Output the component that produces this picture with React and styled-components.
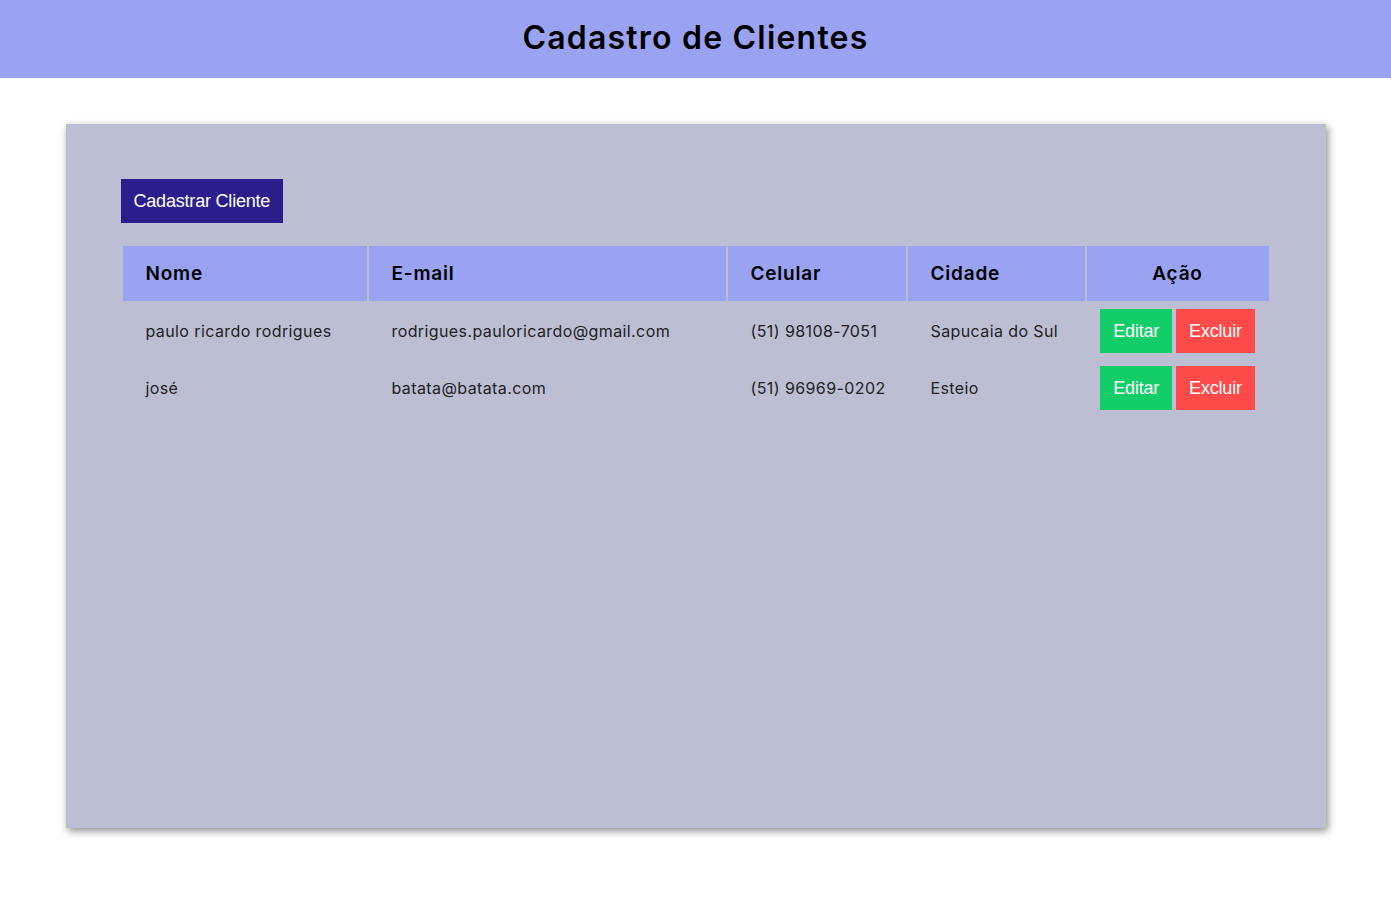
import React from "react";
import styled, { createGlobalStyle } from "styled-components";

const GlobalStyle = createGlobalStyle`
  * {
    box-sizing: border-box;
  }
  body {
    margin: 0;
    background: #ffffff;
    font-family: Inter, "Noto Sans", sans-serif;
  }
`;

const Header = styled.header`
  height: 78px;
  padding-bottom: 3px;
  background-color: #9aa2f2;
  display: flex;
  align-items: center;
  justify-content: center;
`;

const Title = styled.h1`
  margin: 0;
  font-size: 32px;
  font-weight: 600;
  letter-spacing: 1.2px;
  color: #000;
`;

const Container = styled.main`
  width: 1260px;
  height: 704px;
  margin: 46px auto 60px;
  padding: 55px;
  background-color: #bcbed4;
  box-shadow: 2px 3px 8px rgba(0, 0, 0, 0.45);
`;

const Button = styled.button`
  border: none;
  padding: 12px 13px;
  height: 44px;
  font-family: "Liberation Sans", Arial, sans-serif;
  font-size: 18px;
  letter-spacing: -0.2px;
  color: #fff;
  cursor: pointer;
  background-color: ${(p) => p.$bg};
`;

const Table = styled.table`
  width: 100%;
  table-layout: fixed;
  margin-top: 21px;
  border-spacing: 2px;
  color: #222;
`;

const Th = styled.th`
  height: 55px;
  padding: 0 23px;
  background-color: #9aa2f2;
  font-size: 19px;
  font-weight: 600;
  letter-spacing: 0.8px;
  color: #000;
  white-space: nowrap;
  text-align: ${(p) => (p.$center ? "center" : "left")};
  width: ${(p) => p.$w}px;
`;

const Td = styled.td`
  height: 55px;
  padding: ${(p) => (p.$center ? "0" : "0 23px")};
  font-size: 16px;
  letter-spacing: 0.4px;
  color: #222;
  white-space: nowrap;
  text-align: ${(p) => (p.$center ? "center" : "left")};
`;

const Actions = styled.div`
  display: flex;
  justify-content: center;
  gap: 4px;
`;

const clientes = [
  {
    nome: "paulo ricardo rodrigues",
    email: "rodrigues.pauloricardo@gmail.com",
    celular: "(51) 98108-7051",
    cidade: "Sapucaia do Sul",
  },
  {
    nome: "josé",
    email: "batata@batata.com",
    celular: "(51) 96969-0202",
    cidade: "Esteio",
  },
];

const App = () => {
  return (
    <>
      <GlobalStyle />
      <Header>
        <Title>Cadastro de Clientes</Title>
      </Header>
      <Container>
        <Button $bg="#2b1e8c">Cadastrar Cliente</Button>
        <Table>
          <thead>
            <tr>
              <Th $w={244}>Nome</Th>
              <Th $w={357}>E-mail</Th>
              <Th $w={178}>Celular</Th>
              <Th $w={177}>Cidade</Th>
              <Th $w={182} $center>
                Ação
              </Th>
            </tr>
          </thead>
          <tbody>
            {clientes.map((c) => (
              <tr key={c.email}>
                <Td>{c.nome}</Td>
                <Td>{c.email}</Td>
                <Td>{c.celular}</Td>
                <Td>{c.cidade}</Td>
                <Td $center>
                  <Actions>
                    <Button $bg="#12cd68">Editar</Button>
                    <Button $bg="#ff4a4a">Excluir</Button>
                  </Actions>
                </Td>
              </tr>
            ))}
          </tbody>
        </Table>
      </Container>
    </>
  );
};

export default App;
